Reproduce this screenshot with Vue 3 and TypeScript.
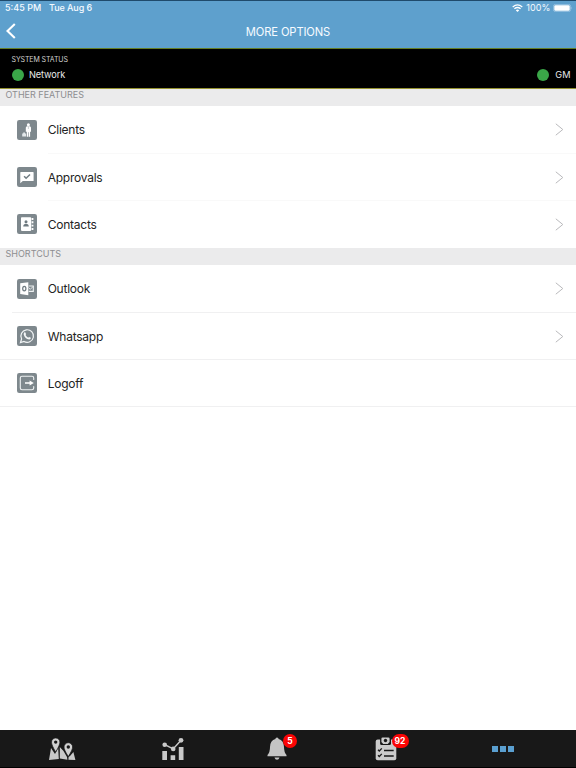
<script setup lang="ts">
interface Item {
  label: string
  icon: 'clients' | 'approvals' | 'contacts' | 'outlook' | 'whatsapp' | 'logoff'
  chevron: boolean
  divider: 'faint' | 'inset' | 'full' | 'none'
}
interface Section {
  title: string
  items: Item[]
}

const sections: Section[] = [
  {
    title: 'OTHER FEATURES',
    items: [
      { label: 'Clients', icon: 'clients', chevron: true, divider: 'faint' },
      { label: 'Approvals', icon: 'approvals', chevron: true, divider: 'faint' },
      { label: 'Contacts', icon: 'contacts', chevron: true, divider: 'none' },
    ],
  },
  {
    title: 'SHORTCUTS',
    items: [
      { label: 'Outlook', icon: 'outlook', chevron: true, divider: 'inset' },
      { label: 'Whatsapp', icon: 'whatsapp', chevron: true, divider: 'full' },
      { label: 'Logoff', icon: 'logoff', chevron: false, divider: 'full' },
    ],
  },
]
</script>

<template>
  <div class="screen">
    <header class="top">
      <div class="statusbar">
        <span class="time">5:45 PM</span>
        <span class="date">Tue Aug 6</span>
        <svg class="wifi" viewBox="0 0 11 8" width="11" height="8">
          <path d="M.7 2.9Q5.5-1.2 10.3 2.9M2.4 4.8Q5.5 2.2 8.6 4.8" fill="none" stroke="#fff" stroke-width="1.25" />
          <path d="M3.8 6.2Q5.5 4.9 7.2 6.2L5.5 8Z" fill="#fff" />
        </svg>
        <span class="percent">100%</span>
        <svg class="battery" viewBox="0 0 20 8" width="20" height="8">
          <rect x=".4" y=".4" width="17.2" height="7.2" rx="2" fill="none" stroke="#a8cce6" stroke-width=".7" />
          <rect x="1.3" y="1.2" width="15.4" height="5.6" rx="1.2" fill="#fff" />
          <path d="M18.5 2.6Q19.8 4 18.5 5.4Z" fill="#a8cce6" />
        </svg>
      </div>
      <div class="nav">
        <svg class="back" viewBox="0 0 10 16" width="10" height="16">
          <path d="M8.8 .9L1.5 8L8.8 15.1" fill="none" stroke="#fff" stroke-width="2.1" />
        </svg>
        <h1>MORE OPTIONS</h1>
      </div>
    </header>

    <section class="system">
      <div class="system-title">SYSTEM STATUS</div>
      <div class="system-row">
        <span class="state"><i class="dot"></i><span class="network">Network</span></span>
        <span class="state gm"><i class="dot"></i><span>GM</span></span>
      </div>
    </section>

    <main>
      <section v-for="section in sections" :key="section.title">
        <h2>{{ section.title }}</h2>
        <div v-for="item in section.items" :key="item.label" class="row" :class="item.divider">
          <svg class="icon" viewBox="0 0 20 20" width="20" height="20">
            <rect width="20" height="20" rx="2.2" fill="#7e888d" />
            <g v-if="item.icon === 'clients'" fill="#fff">
              <circle cx="11.4" cy="4.7" r="1.5" />
              <path d="M9.8 6.3H13L14 7.6V11.7H13.1V16.8H11.8V12.3H11.2V16.8H9.8V11.8H8.8V7.6Z" />
              <path d="M5.2 13.4H6.2V12.5H8V13.4H9.1V16.5H5.2Z" fill="#e3e8ea" />
              <path d="M11.4 6.5V9" stroke="#98a2a7" stroke-width=".5" />
            </g>
            <g v-else-if="item.icon === 'approvals'">
              <path d="M4 5H16Q16.6 5 16.6 5.6V14H5.8L3.3 16.2V5.6Q3.3 5 4 5Z" fill="#fff" />
              <path d="M7.1 9.2L9.1 11.3L13 7.5" fill="none" stroke="#717d83" stroke-width="1.5" />
            </g>
            <g v-else-if="item.icon === 'contacts'">
              <rect x="4" y="3.2" width="10.2" height="13.7" rx=".8" fill="#fff" />
              <circle cx="9" cy="7.8" r="1.5" fill="#6e7a80" />
              <path d="M6.2 12.4Q6.4 9.8 9 9.8T11.8 12.4Z" fill="#6e7a80" />
              <path d="M15.5 4V16.2" stroke="#fff" stroke-width="1.8" stroke-dasharray="1.9 1.45" />
            </g>
            <g v-else-if="item.icon === 'outlook'">
              <path d="M3.2 4.3L11.3 3.2V16.2L3.2 15Z" fill="#fff" />
              <ellipse cx="7.3" cy="9.6" rx="1.6" ry="2.3" fill="none" stroke="#707c82" stroke-width="1.25" />
              <path d="M11.7 7H16.3V12.4H11.7" fill="none" stroke="#eef1f2" stroke-width="1.1" />
              <path d="M11.7 8.6L13.2 10.4L16.2 7.4" fill="none" stroke="#eef1f2" stroke-width=".9" />
            </g>
            <g v-else-if="item.icon === 'whatsapp'" fill="none">
              <path d="M3.5 16.5L4.6 13A6.3 6.3 0 1 1 7 15.5Z" stroke="#f3f6f7" stroke-width="1.2" />
              <path d="M7.5 6.3L8.2 6.2L9.1 8.2L8.5 9.1Q9.4 10.9 11.2 11.8L12 10.9L13.9 11.8Q13.8 13.6 12.1 13.5Q8 12.8 6.7 8.4Q6.6 7 7.5 6.3Z" fill="#f6f8f9" />
            </g>
            <g v-else>
              <path d="M16.7 6.4V5Q16.7 3.3 15 3.3H5Q3.3 3.3 3.3 5V15Q3.3 16.7 5 16.7H15Q16.7 16.7 16.7 15V13.6" fill="none" stroke="#eef1f2" stroke-width="1.1" stroke-linecap="round" />
              <path d="M8 9.2H12.6V7.4L16.8 10L12.6 12.6V10.8H8Z" fill="#fff" />
            </g>
          </svg>
          <span class="label">{{ item.label }}</span>
          <svg v-if="item.chevron" class="chevron" viewBox="0 0 9 13" width="9" height="13">
            <path d="M.8 .8L7.8 6.5L.8 12.2" fill="none" stroke="#b9b9bc" stroke-width="1" />
          </svg>
        </div>
      </section>
    </main>

    <nav class="tabs">
      <span class="tab">
        <svg viewBox="0 0 28 24" width="28" height="24">
          <path d="M3 11L7 17L10.2 11L10.8 22L1 23ZM11.8 10L15.5 14L19 20L19.4 22.8L11.8 21.4ZM22 19L25.4 15L27.4 23L20.4 22.8L20.6 20Z" fill="#c9c9c9" />
          <path d="M7.7 1A4.2 4.2 0 0 1 11.9 5.2Q11.9 8.1 7.7 15Q3.5 8.1 3.5 5.2A4.2 4.2 0 0 1 7.7 1ZM20.3 5.7A4.3 4.3 0 0 1 24.6 10Q24.6 12.8 20.3 19.6Q16 12.8 16 10A4.3 4.3 0 0 1 20.3 5.7Z" fill="#d0d0d0" stroke="#181818" stroke-width=".7" />
          <circle cx="7.7" cy="5.1" r="1.7" fill="#181818" /><circle cx="20.3" cy="10" r="1.7" fill="#181818" />
        </svg>
      </span>
      <span class="tab">
        <svg viewBox="0 0 24 24" width="24" height="24">
          <path d="M3.7 7.7L12.2 11.9L20 3.3" fill="none" stroke="#c9c9c9" stroke-width="1.5" />
          <circle cx="3.7" cy="7.7" r="2.3" fill="#c9c9c9" /><circle cx="12.2" cy="11.9" r="2.3" fill="#c9c9c9" /><circle cx="20" cy="3.3" r="2.4" fill="#c9c9c9" />
          <path d="M1.3 14H6V23H1.3ZM9.6 18.3H14.2V23H9.6ZM17.8 10H22.5V23H17.8Z" fill="#c9c9c9" />
        </svg>
      </span>
      <span class="tab">
        <svg viewBox="0 0 20 24" width="20" height="24">
          <path d="M10 .4Q11.6 .4 11.6 2Q16.9 3.6 17 10Q17 15.3 19.5 18V19.3H.5V18Q3 15.3 3 10Q3.1 3.6 8.4 2Q8.4 .4 10 .4Z" fill="#c4c4c4" />
          <path d="M7.5 20.4H12.5Q11.8 22.8 10 22.8T7.5 20.4Z" fill="#c4c4c4" />
        </svg>
        <b class="badge five">5</b>
      </span>
      <span class="tab">
        <svg viewBox="0 0 22 24" width="22" height="24">
          <rect x=".7" y="2.4" width="20.6" height="20.8" rx="2" fill="#cbcbcb" />
          <path d="M5.1 2V6.5Q5.1 8 6.5 8H14.5Q16 8 16 6.5V2Z" fill="#181818" />
          <path d="M6.4 1.8Q6.4 .6 7.6 .6H13.4Q14.6 .6 14.6 1.8V5L12.8 6.9H8.2L6.4 5Z" fill="#cbcbcb" />
          <circle cx="10.5" cy="3.5" r="1.7" fill="#181818" />
          <path d="M3 12.7L4.3 14L6.8 11.4M3 18.2L4.3 19.5L6.8 16.9M9 13.5H18.7M9 19H18.7" fill="none" stroke="#181818" stroke-width="1.3" />
        </svg>
        <b class="badge many">92</b>
      </span>
      <span class="tab dots"><i></i><i></i><i></i></span>
    </nav>
  </div>
</template>

<style>
body { background: #fff; }
</style>

<style scoped>
* { box-sizing: border-box; }
.screen { width: 576px; height: 768px; display: flex; flex-direction: column; background: #fff; font-family: Inter, "Liberation Sans", sans-serif; overflow: hidden; white-space: nowrap; }
.top { height: 48px; background: #5ea0cd; border-top: 1px solid #1f4a6b; color: #fff; flex: none; }
.statusbar { height: 14px; display: flex; align-items: center; padding: 0 3.5px 0 5px; font-size: 9px; line-height: 14px; font-weight: 500; color: #f5faff; }
.time { width: 44px; letter-spacing: 0; }
.date { letter-spacing: -.08px; }
.wifi { margin-left: auto; }
.percent { margin: 0 2px 0 3.5px; font-weight: 400; letter-spacing: .1px; }
.nav { height: 33px; display: grid; grid-template-columns: 40px 1fr 40px; align-items: center; }
.back { margin-left: 6px; margin-top: -2px; }
h1 { margin: 0; text-align: center; font-size: 11.2px; line-height: 16px; font-weight: 400; letter-spacing: -.13px; color: #f6fbff; }
.system { flex: none; height: 41px; border-top: 1px solid #637d25; border-bottom: 1px solid #969331; background: #000; color: #e9e9e9; padding: 6px 5.5px 0 11.5px; }
.system-title { font-size: 7px; line-height: 9px; letter-spacing: -.1px; color: #d0d0d0; }
.system-row { display: flex; justify-content: space-between; margin-top: 4px; font-size: 9.2px; line-height: 13px; }
.state { display: flex; align-items: center; gap: 5.5px; }
.network { letter-spacing: -.1px; }
.dot { width: 12px; height: 12px; border-radius: 50%; background: #3aa648; }
.gm { gap: 6px; }
h2 { margin: 0; height: 17.4px; background: #ebebec; padding-left: 5.5px; font-size: 9px; line-height: 12px; font-weight: 400; color: #8d8d90; }
.row { height: 47.2px; display: flex; align-items: center; padding: 0 12px 0 16.5px; position: relative; }
.row::after { content: ""; position: absolute; right: 0; bottom: 0; height: 1px; left: 12px; background: #f0f0f1; }
.row.faint::after { left: 48px; background: #f9f9f9; }
.row.full::after { left: 0; }
.row.none::after { display: none; }
.icon { flex: none; margin-right: 11.2px; }
.label { padding-top: 1px; font-size: 12px; line-height: 18px; letter-spacing: -.24px; color: #242424; }
.chevron { margin-left: auto; }
.tabs { margin-top: auto; height: 38px; flex: none; background: #181818; border-bottom: 1px solid #000; display: grid; grid-template-columns: 118px 104px 105px 112px 123px; padding-left: 2.5px; align-items: center; justify-items: center; }
.tab { position: relative; display: flex; }
.badge { position: absolute; display: flex; align-items: center; justify-content: center; background: #fb0505; color: #fff; height: 14px; border-radius: 7px; font-size: 8.5px; line-height: 14px; font-weight: 700; }
.five { left: 16px; top: -3px; width: 14px; }
.many { left: 17px; top: -3px; width: 17px; }
.dots { gap: 1.5px; padding-top: 1px; }
.dots i { width: 6.5px; height: 6.5px; background: #5a9fd0; }
</style>
